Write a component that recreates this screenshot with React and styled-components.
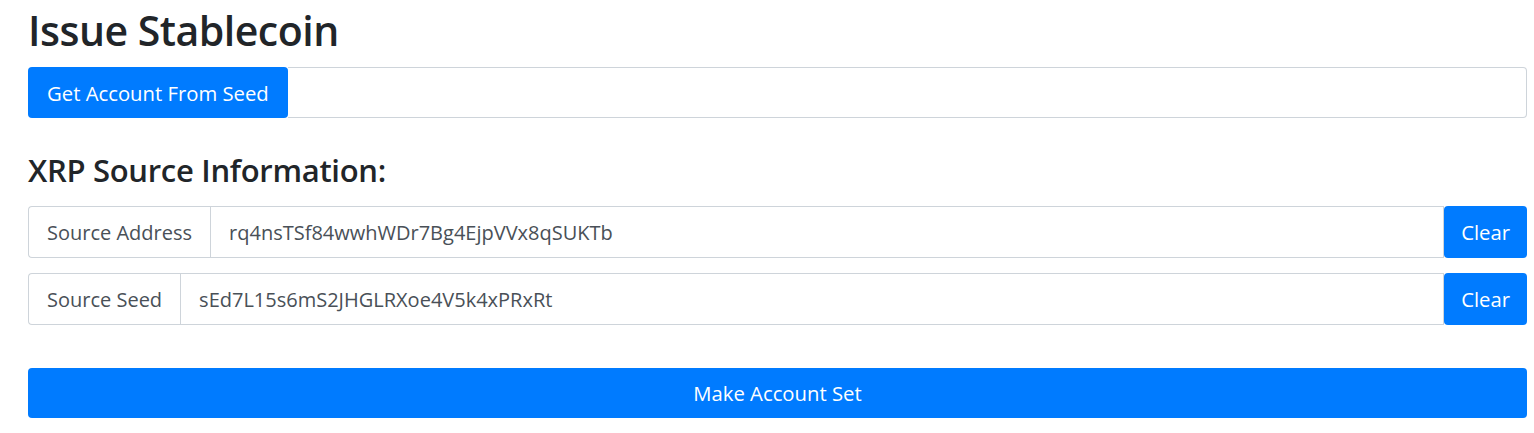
import React, { useState } from "react";
import styled, { createGlobalStyle } from "styled-components";

const GlobalStyle = createGlobalStyle`
  body {
    margin: 0;
    background: #fff;
    font-family: "Open Sans", "Noto Sans", sans-serif;
    color: #212529;
  }
`;

const Page = styled.div`
  display: flex;
  flex-direction: column;
  padding: 0 7px 0 28px;
`;

const Title = styled.h1`
  margin: 0 0 7px;
  height: 60px;
  font-size: 41px;
  font-weight: 600;
  line-height: 60px;
  letter-spacing: -0.5px;
`;

const InputGroup = styled.div`
  display: flex;
  height: ${(p) => p.$height || 52}px;
  margin-bottom: ${(p) => p.$gap || 0}px;
`;

const Button = styled.button`
  border: none;
  background: #007bff;
  color: #fff;
  font-family: inherit;
  font-size: 20.3px;
  padding: 0 ${(p) => p.$pad || 17}px;
  border-radius: 4px;
  cursor: pointer;
  flex: ${(p) => (p.$block ? 1 : "none")};
`;

const Input = styled.input`
  flex: 1;
  min-width: 0;
  border: 1px solid #ced4da;
  border-left: ${(p) => (p.$joined ? "none" : "1px solid #ced4da")};
  border-radius: ${(p) => (p.$joined ? "0 4px 4px 0" : "0")};
  padding: 0 18px;
  font-family: inherit;
  font-size: 20px;
  color: #495057;
  outline: none;
`;

const Label = styled.span`
  display: flex;
  align-items: center;
  border: 1px solid #ced4da;
  border-right: none;
  border-radius: 4px 0 0 4px;
  padding: 0 18px;
  font-size: 20px;
  color: #495057;
  background: #fff;
`;

const SectionHeading = styled.h4`
  margin: 0;
  height: 88px;
  font-size: 31px;
  font-weight: 600;
  line-height: 104px;
  letter-spacing: -0.3px;
`;

const FieldRow = ({ label, value, onClear, gap }) => (
  <InputGroup $gap={gap}>
    <Label>{label}</Label>
    <Input value={value} readOnly />
    <Button onClick={onClear}>Clear</Button>
  </InputGroup>
);

const App = () => {
  const [address, setAddress] = useState("rq4nsTSf84wwhWDr7Bg4EjpVVx8qSUKTb");
  const [seed, setSeed] = useState("sEd7L15s6mS2JHGLRXoe4V5k4xPRxRt");

  return (
    <>
      <GlobalStyle />
      <Page>
        <Title>Issue Stablecoin</Title>
        <InputGroup $height={51}>
          <Button $pad={19}>Get Account From Seed</Button>
          <Input $joined />
        </InputGroup>
        <SectionHeading>XRP Source Information:</SectionHeading>
        <FieldRow
          label="Source Address"
          value={address}
          onClear={() => setAddress("")}
          gap={15}
        />
        <FieldRow
          label="Source Seed"
          value={seed}
          onClear={() => setSeed("")}
          gap={43}
        />
        <InputGroup $height={50}>
          <Button $block>Make Account Set</Button>
        </InputGroup>
      </Page>
    </>
  );
};

export default App;
